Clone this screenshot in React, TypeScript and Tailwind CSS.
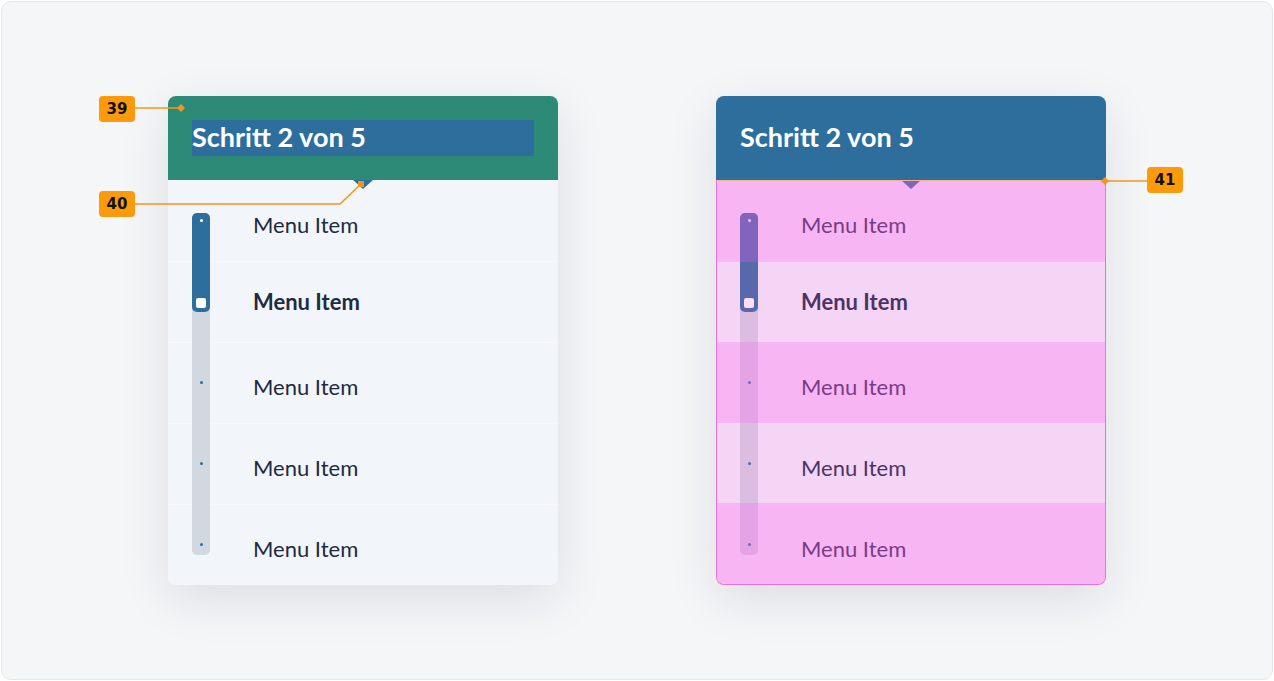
import React from "react";

const rows = [
  { label: "Menu Item", active: false },
  { label: "Menu Item", active: true },
  { label: "Menu Item", active: false },
  { label: "Menu Item", active: false },
  { label: "Menu Item", active: false },
];

const font = { fontFamily: "Lato, 'Noto Sans', sans-serif" };

// vertical step indicator, sits over the rows on the left
const Progress: React.FC = () => (
  <div className="absolute left-6 top-[33px] w-[18px] h-[342px] bg-[#d1d8df] rounded-[5px] flex flex-col items-center">
    <div className="w-full h-[99px] bg-[#2d6e9c] rounded-[5px] flex flex-col items-center justify-between pt-[6px] pb-[4px]">
      <span className="w-[3px] h-[3px] rounded-full bg-white" />
      <span className="w-[10px] h-[10px] rounded-[2px] bg-white" />
    </div>
    <div className="flex flex-col items-center gap-[78px] pt-[69px]">
      <span className="w-[3px] h-[3px] rounded-full bg-[#2d6e9c]" />
      <span className="w-[3px] h-[3px] rounded-full bg-[#2d6e9c]" />
      <span className="w-[3px] h-[3px] rounded-full bg-[#2d6e9c]" />
    </div>
  </div>
);

const StepCard: React.FC<{ inspect: "padding" | "overlay" }> = ({ inspect }) => (
  <div className="w-[390px] rounded-lg shadow-[0_14px_50px_rgba(15,23,42,0.11)]" style={font}>
    <div className={`${inspect === "padding" ? "bg-[#2d8a76]" : "bg-[#2d6e9c]"} p-6 rounded-t-lg`}>
      <div
        className={`${inspect === "padding" ? "bg-[#2d6e9c]" : ""} h-[36px] flex items-center pb-[4px] text-white text-[27px] font-bold leading-none`}
      >
        Schritt 2 von 5
      </div>
    </div>

    <div className="relative bg-[#f2f5f9] rounded-b-lg">
      <div className="absolute left-[185px] top-0 w-0 h-0 border-x-[10px] border-x-transparent border-t-[9px] border-t-[#2d6e9c]" />
      {rows.map((row, i) => (
        <div
          key={i}
          className={`h-[81px] flex items-center pl-[85px] ${i > 0 ? "border-t border-[#f7f9fb]" : ""}`}
        >
          <span
            className={`text-[22px] text-[#1d2c44] leading-none ${row.active ? "font-bold" : "font-normal pt-[8px]"}`}
          >
            {row.label}
          </span>
        </div>
      ))}
      <Progress />

      {inspect === "overlay" && (
        <div className="absolute inset-0 flex flex-col rounded-b-lg overflow-hidden border border-[#ef6fd0] border-t-[#f6b38f]">
          {rows.map((_, i) => (
            <div key={i} className={`h-[81px] ${i % 2 === 0 ? "bg-[#fe55ea]/40" : "bg-[#fe55ea]/20"}`} />
          ))}
        </div>
      )}
    </div>
  </div>
);

const Badge: React.FC<{ n: number; className: string }> = ({ n, className }) => (
  <div
    className={`absolute w-9 h-[26px] rounded-[4px] bg-[#fd9a0c] flex items-center justify-center text-[15px] font-bold text-[#111] ${className}`}
    style={{ fontFamily: "'DejaVu Sans', sans-serif" }}
  >
    {n}
  </div>
);

export default function App() {
  return (
    <div className="w-[1274px] h-[681px] bg-white p-px">
      <div className="relative h-full rounded-[10px] border border-[#e4e6ea] bg-[#f5f6f8] flex items-center justify-center gap-[158px]">
        <StepCard inspect="padding" />
        <StepCard inspect="overlay" />

        {/* annotation leader lines */}
        <svg className="absolute left-[-2px] top-[-2px] pointer-events-none" width="1274" height="681">
          <g stroke="#f7941d" strokeWidth="1.5" fill="none">
            <line x1="135" y1="108" x2="181" y2="108" />
            <polyline points="135,204 340,204 361,184" />
            <line x1="1105" y1="181" x2="1148" y2="181" />
          </g>
          <g fill="#f7941d">
            <polygon points="181,104 185,108 181,112 177,108" />
            <rect x="358" y="181" width="6" height="6" />
            <polygon points="1105,177 1109,181 1105,185 1101,181" />
          </g>
        </svg>

        <Badge n={39} className="left-[97px] top-[94px]" />
        <Badge n={40} className="left-[97px] top-[189px]" />
        <Badge n={41} className="left-[1145px] top-[165px]" />
      </div>
    </div>
  );
}
